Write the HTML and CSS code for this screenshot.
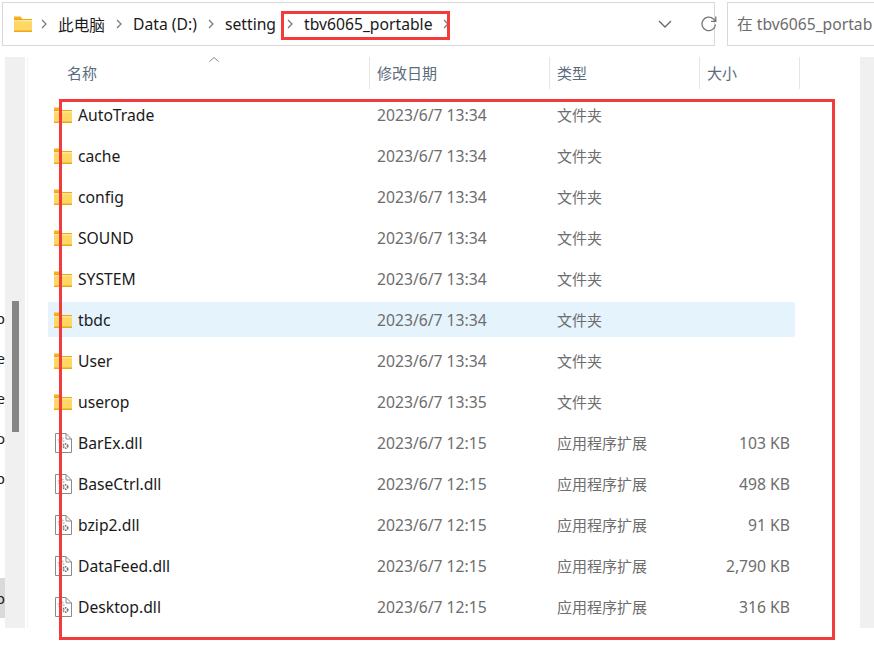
FILE: index.html
```html
<!DOCTYPE html>
<html lang="zh-CN">
<head>
    <meta charset="UTF-8">
    <meta name="viewport" content="width=device-width, initial-scale=1.0">
    <title>tbv6065_portable</title>
    <link rel="stylesheet" href="styles.css">
</head>
<body>
    <svg class="sprites" width="0" height="0">
        <symbol id="folder" viewBox="0 0 18 16">
            <path d="M0 0.5h6.5l2 2.5H0z" fill="#f5b11c"/>
            <path d="M0 3h18v13H0z" fill="#eda71c"/>
            <path d="M0 4h18v10.5H0z" fill="#ffd764"/>
            <path d="M0 4h18v1.5H0z" fill="#ffe594"/>
        </symbol>
        <symbol id="dll" viewBox="0 0 17 20">
            <path d="M0.5 0.5h10.5l5.5 5.5v13.500h-16z" fill="#fff" stroke="#8a8a8a"/>
            <path d="M11 0.5v5.500h5.500" fill="none" stroke="#8a8a8a"/>
            <circle cx="6" cy="7.500" r="2.500" fill="none" stroke="#c4c4c4" stroke-width="2" stroke-dasharray="1.500 1"/>
            <circle cx="10.500" cy="13" r="2.200" fill="none" stroke="#777" stroke-width="1.800" stroke-dasharray="1.400 .8"/>
        </symbol>
        <symbol id="chev" viewBox="0 0 6 10">
            <path d="M1 1l4 4-4 4" fill="none" stroke="#777" stroke-width="1.200"/>
        </symbol>
    </svg>

    <header class="toolbar">
        <div class="address">
            <svg class="crumb-folder"><use href="#folder"/></svg>
            <svg class="chev first"><use href="#chev"/></svg>
            <span class="crumb">此电脑</span>
            <svg class="chev"><use href="#chev"/></svg>
            <span class="crumb">Data (D:)</span>
            <svg class="chev"><use href="#chev"/></svg>
            <span class="crumb">setting</span>
            <svg class="chev"><use href="#chev"/></svg>
            <span class="crumb">tbv6065_portable</span>
            <svg class="chev"><use href="#chev"/></svg>
            <svg class="dropdown" viewBox="0 0 14 8"><path d="M1 1l6 6 6-6" fill="none" stroke="#666" stroke-width="1.300"/></svg>
            <svg class="refresh" viewBox="0 0 18 18"><path d="M15.500 9.500a6.800 6.800 0 1 1-2-5.500l2 2M15.800 1.500v4.800h-4.800" fill="none" stroke="#777" stroke-width="1.300"/></svg>
        </div>
        <div class="search">在 tbv6065_portab</div>
    </header>

    <div class="window">
        <nav class="nav-gutter">
            <span>p</span>
            <span>e</span>
            <span>e</span>
            <span>o</span>
            <span>p</span>
            <span></span>
            <span></span>
            <span class="nav-current">p</span>
        </nav>
        <div class="scroll-left"><div class="thumb"></div></div>

        <main class="files">
            <div class="columns">
                <div class="col col-name">名称<svg class="sort" viewBox="0 0 10 5"><path d="M.5 4.500l4.500-4 4.500 4" fill="none" stroke="#888"/></svg></div>
                <div class="col col-date">修改日期</div>
                <div class="col col-type">类型</div>
                <div class="col col-size">大小</div>
            </div>
            <ul id="file-list" class="file-list"></ul>
        </main>

        <div class="scroll-right"></div>
    </div>

    <div class="mark mark-crumb"></div>
    <div class="mark mark-list"></div>

    <script>
        const files = [
            ['AutoTrade', '2023/6/7 13:34', '文件夹', ''],
            ['cache', '2023/6/7 13:34', '文件夹', ''],
            ['config', '2023/6/7 13:34', '文件夹', ''],
            ['SOUND', '2023/6/7 13:34', '文件夹', ''],
            ['SYSTEM', '2023/6/7 13:34', '文件夹', ''],
            ['tbdc', '2023/6/7 13:34', '文件夹', ''],
            ['User', '2023/6/7 13:34', '文件夹', ''],
            ['userop', '2023/6/7 13:35', '文件夹', ''],
            ['BarEx.dll', '2023/6/7 12:15', '应用程序扩展', '103 KB'],
            ['BaseCtrl.dll', '2023/6/7 12:15', '应用程序扩展', '498 KB'],
            ['bzip2.dll', '2023/6/7 12:15', '应用程序扩展', '91 KB'],
            ['DataFeed.dll', '2023/6/7 12:15', '应用程序扩展', '2,790 KB'],
            ['Desktop.dll', '2023/6/7 12:15', '应用程序扩展', '316 KB']
        ];

        const list = document.getElementById('file-list');
        list.innerHTML = files.map(([name, date, type, size]) => {
            const isFolder = type === '文件夹';
            const icon = isFolder ? 'folder' : 'dll';
            const active = name === 'tbdc' ? ' active' : '';
            return `<li class="row${active}">
                <span class="name"><svg class="icon-${icon}"><use href="#${icon}"/></svg>${name}</span>
                <span class="date">${date}</span>
                <span class="type">${type}</span>
                <span class="size">${size}</span>
            </li>`;
        }).join('');
    </script>
</body>
</html>
```

FILE: styles.css
```css
body {
    font-family: "Noto Sans", "Noto Sans CJK SC", sans-serif;
    font-size: 15px;
    background-color: #fff;
    color: #1a1a1a;
    margin: 0;
    width: 874px;
    height: 650px;
    overflow: hidden;
    position: relative;
}

.sprites {
    position: absolute;
}

.toolbar {
    display: flex;
    gap: 12px;
    padding: 2px 0 0 2px;
    height: 44px;
}

.address {
    display: flex;
    flex: none;
    align-items: center;
    width: 713px;
    height: 44px;
    box-sizing: border-box;
    border: 1px solid #d9d9d9;
    padding-left: 11px;
    font-size: 15.7px;
    white-space: nowrap;
}

.crumb {
    flex: none;
}

.crumb-folder {
    flex: none;
    width: 18px;
    height: 16px;
}

.chev {
    flex: none;
    width: 6px;
    height: 10px;
    margin: 0 11px;
}

.chev.first {
    margin: 0 11px 0 9px;
}

.dropdown {
    flex: none;
    width: 14px;
    height: 8px;
    margin-left: 198px;
}

.refresh {
    flex: none;
    width: 18px;
    height: 18px;
    margin-left: 28px;
}

.search {
    flex: none;
    width: 200px;
    height: 44px;
    box-sizing: border-box;
    border: 1px solid #d9d9d9;
    padding-left: 9px;
    font-size: 15.7px;
    line-height: 42px;
    color: #6d6d6d;
    white-space: nowrap;
    overflow: hidden;
}

.window {
    display: flex;
    height: 571px;
    margin-top: 11px;
}

.nav-gutter {
    width: 5px;
    overflow: hidden;
    display: flex;
    flex-direction: column;
    padding-top: 241px;
    box-sizing: border-box;
}

.nav-gutter span {
    flex: none;
    height: 40px;
    line-height: 40px;
    display: flex;
    justify-content: flex-end;
}

.nav-current {
    background-color: #d9d9d9;
}

.scroll-left {
    width: 20px;
    background-color: #f0f0f0;
    margin-right: 2px;
}

.thumb {
    width: 7px;
    height: 131px;
    margin: 244px 0 0 7px;
    background-color: #858585;
}

.files {
    width: 833px;
    border-left: 1px solid #f5f5f5;
    box-sizing: border-box;
    padding-left: 20px;
}

.columns {
    display: flex;
    height: 32px;
    color: #5a6b7e;
    margin-bottom: 8px;
}

.col {
    box-sizing: border-box;
    border-right: 1px solid #e5e5e5;
    padding-left: 7px;
    line-height: 32px;
}

.col-name {
    width: 322px;
    padding-left: 19px;
    position: relative;
}

.col-date {
    width: 180px;
}

.col-type {
    width: 150px;
}

.col-size {
    width: 100px;
}

.sort {
    position: absolute;
    left: 161px;
    top: 0;
    width: 10px;
    height: 5px;
}

.file-list {
    list-style: none;
    padding: 0;
    margin: 0;
}

.row {
    display: grid;
    grid-template-columns: 322px 180px 150px 95px;
    width: 747px;
    height: 35px;
    line-height: 36px;
    margin-bottom: 6px;
    border-radius: 2px;
    font-size: 15.7px;
}

.row.active {
    background-color: #e5f3fd;
}

.name {
    display: flex;
    align-items: center;
}

.icon-folder {
    width: 18px;
    height: 16px;
    margin: 0 6px;
}

.icon-dll {
    width: 17px;
    height: 20px;
    margin: 0 6px 0 7px;
}

.date,
.type,
.size {
    color: #6d6d6d;
    padding-left: 7px;
}

.type {
    font-size: 15px;
}

.size {
    padding: 0 5px 0 0;
    text-align: right;
}

.scroll-right {
    width: 14px;
    background-color: #f0f0f0;
}

.mark {
    position: absolute;
    box-sizing: border-box;
    border: 3px solid #f43b3b;
}

.mark-crumb {
    left: 281px;
    top: 11px;
    width: 169px;
    height: 29px;
}

.mark-list {
    left: 59px;
    top: 99px;
    width: 776px;
    height: 541px;
}
```
